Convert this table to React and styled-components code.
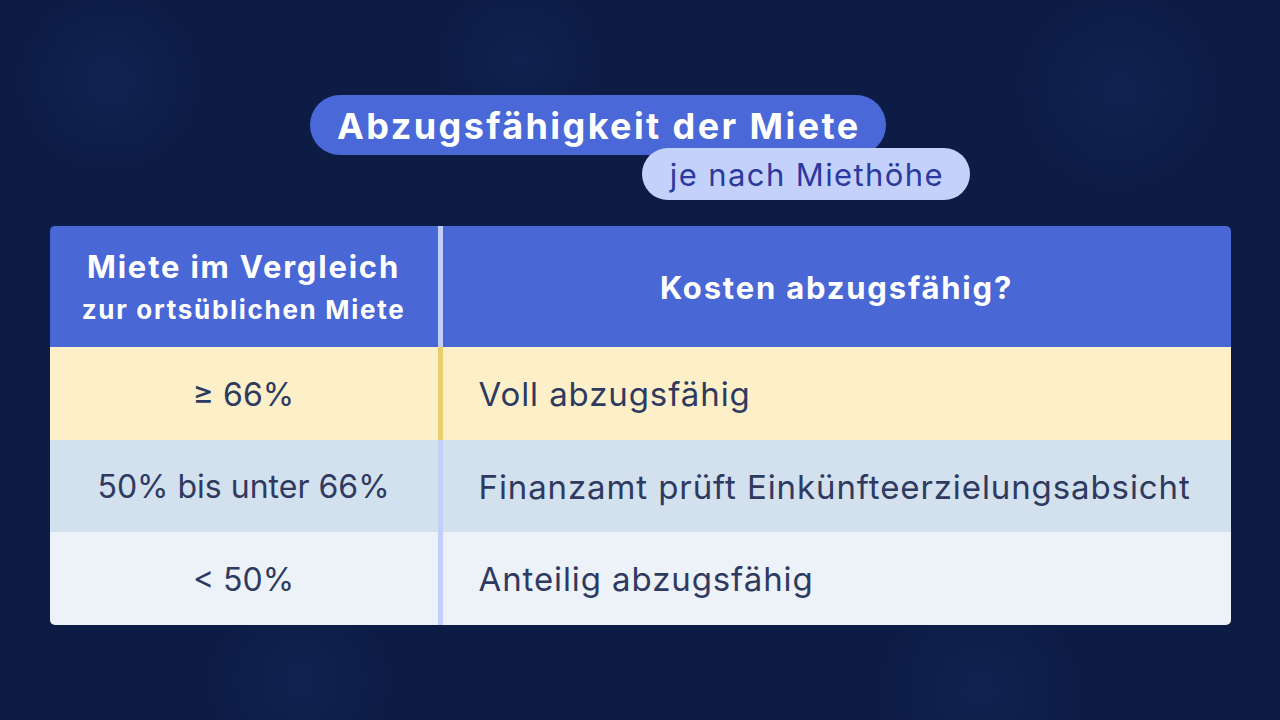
import React from 'react';
import styled, { createGlobalStyle } from 'styled-components';

const GlobalStyle = createGlobalStyle`
  html, body {
    margin: 0;
    padding: 0;
  }
  body {
    font-family: Inter, Lato, sans-serif;
    background: #0c1c45;
  }
`;

const rows = [
  { range: '≥ 66%', result: 'Voll abzugsfähig', tone: 'yellow' },
  { range: '50% bis unter 66%', result: 'Finanzamt prüft Einkünfteerzielungsabsicht', tone: 'blue' },
  { range: '< 50%', result: 'Anteilig abzugsfähig', tone: 'light' },
];

const tones = {
  yellow: { bg: '#fdf0c9', divider: '#e9ce70' },
  blue: { bg: '#d3e0ee', divider: '#c2cffa' },
  light: { bg: '#edf1f8', divider: '#c2cffa' },
};

export default function App() {
  return (
    <>
      <GlobalStyle />
      <Stage>
        <Heading>
          <TitlePill>Abzugsfähigkeit der Miete</TitlePill>
          <SubtitlePill>je nach Miethöhe</SubtitlePill>
        </Heading>
        <Table>
          <HeaderRow>
            <HeaderCell>
              <HeadMain>Miete im Vergleich</HeadMain>
              <HeadSub>zur ortsüblichen Miete</HeadSub>
            </HeaderCell>
            <Divider $color="#c2cffa" />
            <HeaderCell>
              <HeadMain>Kosten abzugsfähig?</HeadMain>
            </HeaderCell>
          </HeaderRow>
          {rows.map((row) => (
            <Row key={row.range} $bg={tones[row.tone].bg}>
              <RangeCell>{row.range}</RangeCell>
              <Divider $color={tones[row.tone].divider} />
              <ResultCell>{row.result}</ResultCell>
            </Row>
          ))}
        </Table>
      </Stage>
    </>
  );
}

const Stage = styled.div`
  width: 1280px;
  height: 720px;
  box-sizing: border-box;
  padding: 95px 49px 0 49px;
  display: flex;
  flex-direction: column;
  align-items: center;
  overflow: hidden;
  background:
    radial-gradient(circle at 110px 80px, rgba(30, 55, 120, 0.25) 0, transparent 90px),
    radial-gradient(circle at 520px 60px, rgba(30, 55, 120, 0.2) 0, transparent 80px),
    radial-gradient(circle at 1120px 90px, rgba(30, 55, 120, 0.22) 0, transparent 100px),
    radial-gradient(circle at 300px 680px, rgba(30, 55, 120, 0.22) 0, transparent 90px),
    radial-gradient(circle at 980px 690px, rgba(30, 55, 120, 0.22) 0, transparent 100px),
    #0c1c45;
`;

const Heading = styled.div`
  width: 660px;
  display: flex;
  flex-direction: column;
`;

const TitlePill = styled.div`
  align-self: flex-start;
  height: 60px;
  box-sizing: border-box;
  padding: 0 25px 0 27px;
  border-radius: 30px;
  background: #4a68d7;
  color: #ffffff;
  font-weight: 700;
  font-size: 36px;
  letter-spacing: 2.4px;
  line-height: 62px;
  white-space: nowrap;
`;

const SubtitlePill = styled.div`
  align-self: flex-end;
  position: relative;
  margin-top: -7px;
  height: 52px;
  box-sizing: border-box;
  padding: 0 26px 0 28px;
  border-radius: 26px;
  background: #c4d2fb;
  color: #2b3a9c;
  font-size: 31px;
  letter-spacing: 1.4px;
  line-height: 54px;
  white-space: nowrap;
`;

const Table = styled.div`
  margin-top: 26px;
  width: 1181px;
  border-radius: 5px;
  overflow: hidden;
  display: flex;
  flex-direction: column;
`;

const HeaderRow = styled.div`
  display: grid;
  grid-template-columns: 388px 5px 1fr;
  height: 121px;
  background: #4a67d6;
`;

const HeaderCell = styled.div`
  display: flex;
  flex-direction: column;
  align-items: center;
  justify-content: center;
  padding-top: 2px;
  color: #ffffff;
  font-weight: 700;
`;

const HeadMain = styled.div`
  font-size: 31px;
  letter-spacing: 1.8px;
  line-height: 40px;
`;

const HeadSub = styled.div`
  margin-top: 5px;
  font-size: 26px;
  letter-spacing: 1.7px;
  line-height: 36px;
`;

const Divider = styled.div`
  background: ${(p) => p.$color};
`;

const Row = styled.div`
  display: grid;
  grid-template-columns: 388px 5px 1fr;
  height: 92.5px;
  background: ${(p) => p.$bg};
  color: #2e3a5f;
`;

const RangeCell = styled.div`
  display: flex;
  align-items: center;
  justify-content: center;
  font-size: 32px;
  padding-top: 2px;
`;

const ResultCell = styled.div`
  display: flex;
  align-items: center;
  padding: 2px 0 0 36px;
  font-size: 33px;
  letter-spacing: 0.9px;
`;
